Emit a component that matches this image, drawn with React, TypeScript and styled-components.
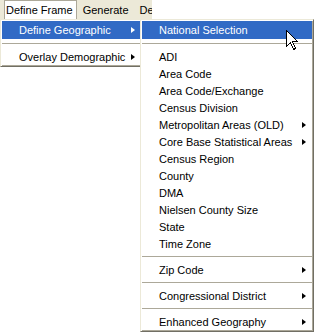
import styled, { createGlobalStyle } from "styled-components";

const GlobalStyle = createGlobalStyle`
    html, body {
        margin: 0;
        padding: 0;
        background: #ffffff;
    }
    body {
        font-family: "Liberation Sans", Arial, sans-serif;
        font-size: 11px;
    }
`;

const Screen = styled.div`
    position: relative;
    width: 314px;
    height: 334px;
    overflow: hidden;
    background: #ffffff;
`;

const MenuBar = styled.div`
    display: flex;
    align-items: stretch;
    width: 148px;
    height: 19px;
    padding-left: 4px;
    overflow: hidden;
    background: #ece9d8;
`;

const BarItem = styled.div<{ open?: boolean }>`
    display: flex;
    align-items: center;
    padding: ${(p) => (p.open ? "0 3px 0 1px" : "0 4px 0 5px")};
    background: ${(p) => (p.open ? "#ffffff" : "transparent")};
    border: 1px solid ${(p) => (p.open ? "#aca899" : "transparent")};
    border-bottom: none;
    color: #000;
    font-family: "Liberation Sans", Arial, sans-serif;
    font-size: 11px;
    white-space: nowrap;
`;

const Popup = styled.div<{ left: number; width: number }>`
    position: absolute;
    top: 19px;
    left: ${(p) => p.left}px;
    width: ${(p) => p.width}px;
    box-sizing: border-box;
    padding: 1px;
    background: #ffffff;
    border: 1px solid;
    border-color: #ece9d8 #716f64 #716f64 #ece9d8;
    box-shadow: inset 1px 1px 0 #ffffff, inset -1px -1px 0 #aca899;
    display: flex;
    flex-direction: column;
`;

const Item = styled.div<{ active?: boolean; tall?: boolean }>`
    display: flex;
    align-items: center;
    height: ${(p) => (p.tall ? 18 : 17)}px;
    padding: 0 6px 0 17px;
    background: ${(p) => (p.active ? "#316ac5" : "transparent")};
    color: ${(p) => (p.active ? "#ffffff" : "#000000")};
    font-family: "Liberation Sans", Arial, sans-serif;
    font-size: 11px;
    white-space: nowrap;
`;

const Label = styled.span`
    flex: 1;
`;

const Arrow = styled.span`
    width: 0;
    height: 0;
    border-top: 3.5px solid transparent;
    border-bottom: 3.5px solid transparent;
    border-left: 4px solid currentColor;
`;

const Separator = styled.div`
    height: 9px;
    display: flex;
    align-items: center;
    &::after {
        content: "";
        flex: 1;
        height: 1px;
        background: #aca899;
    }
`;

const Cursor = styled.svg`
    position: absolute;
    left: 286px;
    top: 30px;
`;

type Entry = { label: string; sub?: boolean; active?: boolean } | "sep";

const geoItems: Entry[] = [
    { label: "National Selection", active: true },
    "sep",
    { label: "ADI" },
    { label: "Area Code" },
    { label: "Area Code/Exchange" },
    { label: "Census Division" },
    { label: "Metropolitan Areas (OLD)", sub: true },
    { label: "Core Base Statistical Areas", sub: true },
    { label: "Census Region" },
    { label: "County" },
    { label: "DMA" },
    { label: "Nielsen County Size" },
    { label: "State" },
    { label: "Time Zone" },
    "sep",
    { label: "Zip Code", sub: true },
    "sep",
    { label: "Congressional District", sub: true },
    "sep",
    { label: "Enhanced Geography", sub: true },
];

const frameItems: Entry[] = [
    { label: "Define Geographic", sub: true, active: true },
    "sep",
    { label: "Overlay Demographic", sub: true },
];

function MenuList({ items }: { items: Entry[] }) {
    return (
        <>
            {items.map((it, i) =>
                it === "sep" ? (
                    <Separator key={i} />
                ) : (
                    <Item key={i} active={it.active} tall={i === 0}>
                        <Label>{it.label}</Label>
                        {it.sub && <Arrow />}
                    </Item>
                )
            )}
        </>
    );
}

export default function App() {
    return (
        <Screen>
            <GlobalStyle />
            <MenuBar>
                <BarItem open>Define Frame</BarItem>
                <BarItem>Generate</BarItem>
                <BarItem>Define</BarItem>
            </MenuBar>
            <Popup left={0} width={143}>
                <MenuList items={frameItems} />
            </Popup>
            <Popup left={140} width={174}>
                <MenuList items={geoItems} />
            </Popup>
            {/* mouse pointer */}
            <Cursor width="13" height="21" viewBox="0 0 13 21">
                <path
                    d="M0.5 0.5 L0.5 16.5 L4.5 12.5 L7.5 19.5 L9.5 18.5 L6.5 11.5 L11.5 11.5 Z"
                    fill="#ffffff"
                    stroke="#000000"
                    strokeWidth="1"
                    shapeRendering="crispEdges"
                />
            </Cursor>
        </Screen>
    );
}
